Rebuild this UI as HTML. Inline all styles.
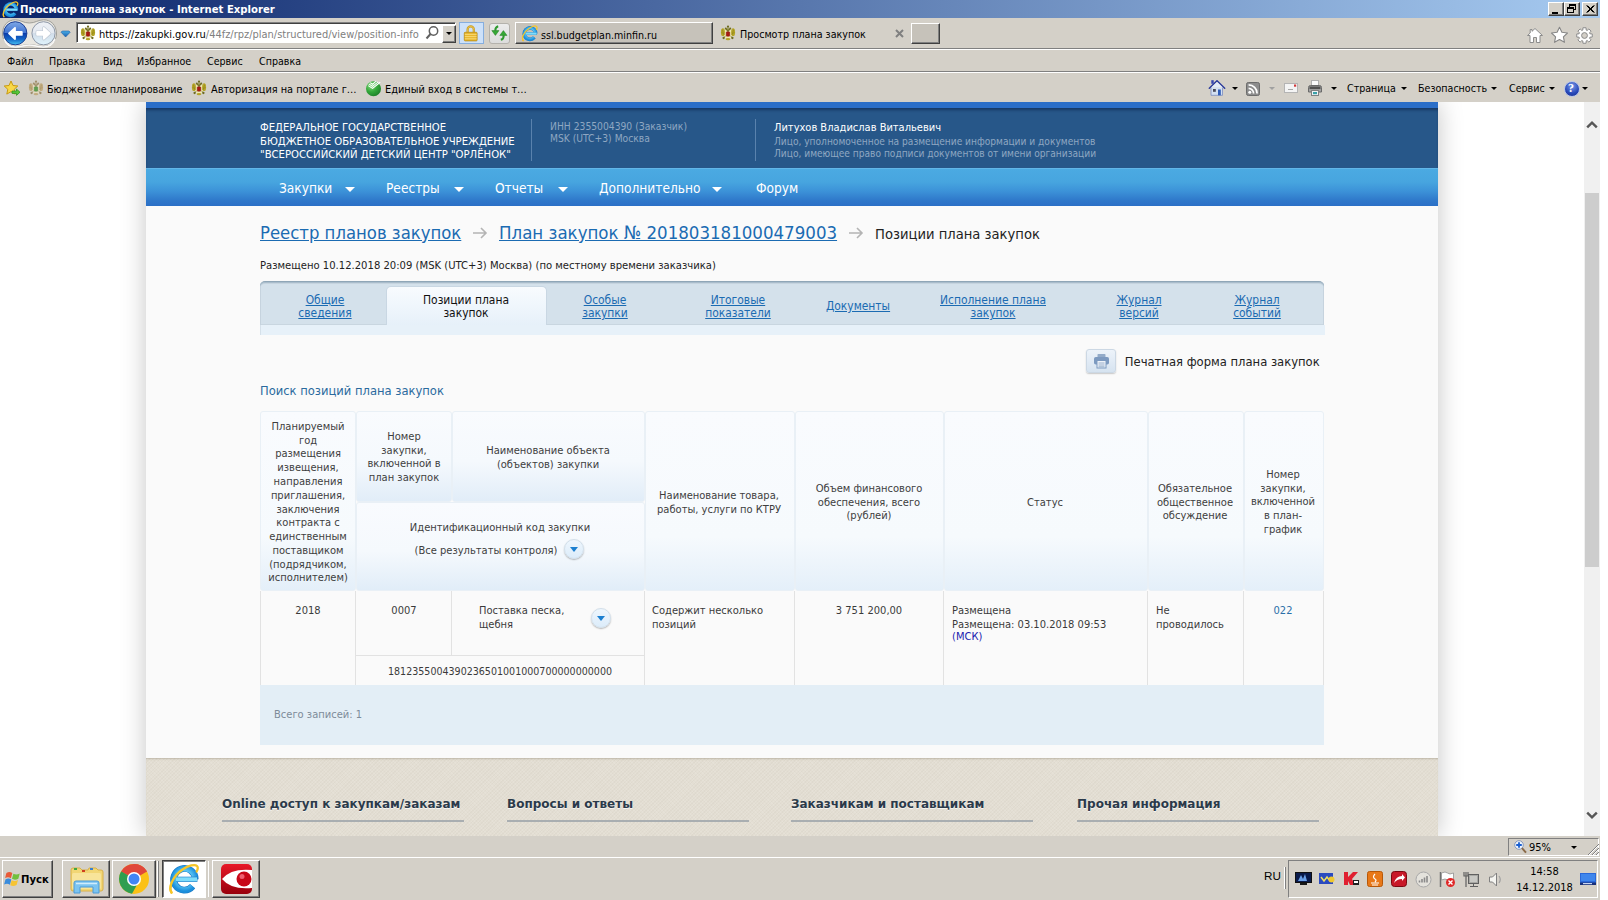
<!DOCTYPE html>
<html lang="ru">
<head>
<meta charset="utf-8">
<title>Просмотр плана закупок - Internet Explorer</title>
<style>
*{box-sizing:border-box}
html,body{margin:0;padding:0}
body{width:1608px;height:900px;overflow:hidden;background:#fff;font-family:"DejaVu Sans Condensed","DejaVu Sans","Liberation Sans",sans-serif;font-stretch:condensed;font-size:10.6px;color:#000;position:relative}
.abs{position:absolute}
.t{position:absolute;white-space:nowrap;line-height:14px}
/* ---------- browser chrome ---------- */
#chrome{position:absolute;left:0;top:0;width:1600px;height:102px;background:#d4d0c8}
#titlebar{position:absolute;left:0;top:0;width:1600px;height:18px;background:linear-gradient(to right,#0a246a 0%,#a6caf0 100%)}
#titlebar .t{left:20px;top:3px;color:#fff;font-weight:bold;font-size:11.23px}
.wbtn{position:absolute;top:2px;width:16px;height:14px;background:#d4d0c8;border:1px solid;border-color:#fff #404040 #404040 #fff;box-shadow:inset -1px -1px 0 #808080}
.sep{position:absolute;left:0;width:1600px;height:2px;border-top:1px solid #808080;border-bottom:1px solid #fff}
#addr{position:absolute;left:76px;top:22px;width:380px;height:21px;background:#fff;border:1px solid;border-color:#808080 #fff #fff #808080;box-shadow:inset 1px 1px 0 #404040}
.menu .t{top:54px;font-size:10.6px}
.bm .t{top:82.7px;font-size:10.7px}
.cmd .t{top:81px;font-size:10.6px}
.tri{position:absolute;width:0;height:0;border-left:3px solid transparent;border-right:3px solid transparent;border-top:3px solid #000}
/* ---------- page ---------- */
#view{position:absolute;left:0;top:102px;width:1584px;height:734px;background:#fff;overflow:hidden}
#wrap{position:absolute;left:146px;top:0;width:1292px;height:734px;background:#fafafa;box-shadow:0 0 24px rgba(0,0,0,.23)}

/* page */
#hdrtop{position:absolute;left:0;top:0;width:1292px;height:7px;background:#2b6ec8}
#hdr{position:absolute;left:0;top:6px;width:1292px;height:60px;background:#275789;box-shadow:inset 0 3px 3px -1px rgba(10,30,70,.55)}
#hdr .t{color:#fff}
#hdr .g{color:#8fa7c2}
.vsep{position:absolute;top:11px;width:1px;height:42px;background:#5a82ad}
#nav{position:absolute;left:0;top:66px;width:1292px;height:38px;background:linear-gradient(#4baae2 0%,#47a5df 35%,#3c92d8 60%,#2f78ca 85%,#2b6fc6 100%);border-top:1px solid #62b6e8}
#nav .t{color:#fff;font-size:13.6px;top:10px;line-height:18px}
.ntri{position:absolute;top:18px;width:0;height:0;border-left:5px solid transparent;border-right:5px solid transparent;border-top:5px solid #fff}
a,.lnk{color:#1b6bb2;text-decoration:underline}
#bc .t{font-size:18.33px;line-height:24px;top:119px}
#tabs{position:absolute;left:114px;top:179px;width:1064px;height:44px;background:#d4e1eb;border-top:1px solid #8fa6b7;border-radius:5px 5px 0 0;box-shadow:inset 0 1px 0 #a9bccb,inset 0 2px 0 #c6d4df,inset 1px 0 0 #c6d3de,inset -1px 0 0 #c6d3de,inset 0 -1px 0 #c9d6e0}
#tabsub{position:absolute;left:114px;top:223px;width:1065px;height:10px;background:#e7f1f9;box-shadow:inset 1px 0 0 #d6e1ea}
#tabs .tb{position:absolute;top:12px;text-align:center;font-size:11.93px;line-height:13.2px;transform:translateX(-50%);white-space:nowrap}
#tabact{position:absolute;left:126px;top:4px;width:161px;height:40px;border-radius:5px 5px 0 0;background:linear-gradient(#f8fbfe 0%,#eff6fc 50%,#e6f0f9 100%);border:1px solid #c9d7e3;border-bottom:none}
.th{position:absolute;background:linear-gradient(#f9fbfe 0%,#f6fafd 70%,#e4eff9 100%);border:1px solid #e9f0f6;border-radius:3px}
.th2{background:linear-gradient(#f9fbfe 0%,#f5f9fd 55%,#e1edf8 100%)}
.ht{position:absolute;text-align:center;font-size:11.05px;line-height:13.78px;color:#3e3e3e;margin-top:.9px;transform:translate(-50%,-50%);white-space:nowrap}
.td{position:absolute;font-size:11.05px;line-height:13.78px;color:#3a3a3a;white-space:nowrap;margin-top:1px}
.ln{position:absolute;background:#e2e2e2}
.cbtn{position:absolute;width:20px;height:20px;border-radius:50%;background:linear-gradient(#eef6fd,#dcecfa);border:1px solid #d2dfea;box-shadow:0 1px 1.500px rgba(0,0,0,.28)}
.cbtn i{position:absolute;left:4.500px;top:7px;width:0;height:0;border-left:4.700px solid transparent;border-right:4.700px solid transparent;border-top:5px solid #1b7fd0}
#pfoot{position:absolute;left:0;top:656px;width:1292px;height:78px;background:repeating-linear-gradient(45deg,rgba(255,255,255,.09) 0,rgba(255,255,255,.09) 1px,rgba(0,0,0,0) 1px,rgba(0,0,0,0) 2.500px),repeating-linear-gradient(-45deg,rgba(120,110,90,.045) 0,rgba(120,110,90,.045) 1px,rgba(0,0,0,0) 1px,rgba(0,0,0,0) 2.500px),#e3ded3;box-shadow:inset 0 2px 2px -1px rgba(120,110,90,.35)}
#pfoot .t{font-family:'DejaVu Sans','Liberation Sans',sans-serif;font-stretch:normal;font-weight:bold;font-size:12px;color:#2b3a4a;top:37px;line-height:18px;text-shadow:0 1px 0 rgba(255,255,255,.7)}
#pfoot .u{position:absolute;top:62px;height:2px;width:242px;background:#a9aeb1}

#sb{position:absolute;left:1584px;top:102px;width:16px;height:734px;background:#f0f0f0}
#sb .thumb{position:absolute;left:1px;top:91px;width:14px;height:374px;background:#cdcdcd}
.raised{position:absolute;background:#d4d0c8;border:1px solid;border-color:#fff #404040 #404040 #fff;box-shadow:inset -1px -1px 0 #808080,inset 1px 1px 0 #d4d0c8}
.sunken{position:absolute;border:1px solid;border-color:#808080 #fff #fff #808080}
/* ---------- bottom ---------- */
#status{position:absolute;left:0;top:836px;width:1600px;height:22px;background:#d4d0c8}
#taskbar{position:absolute;left:0;top:857px;width:1600px;height:43px;padding-top:0;background:#d4d0c8;border-top:1px solid #fff}
</style>
</head>
<body>
<svg width="0" height="0" style="position:absolute">
  <defs>
    <radialGradient id="ieg" cx=".5" cy=".45" r=".6"><stop offset="0" stop-color="#a4ecfd"/><stop offset=".6" stop-color="#58c4f4"/><stop offset="1" stop-color="#1c8fdc"/></radialGradient>
    <symbol id="ie" viewBox="0 0 32 32">
      <path d="M3.500 29.500C.5 25.500 4 17 10.500 10.500" fill="none" stroke="#f2b822" stroke-width="2.200" stroke-linecap="round"/>
      <path d="M27.200 16.200A10.800 10.800 0 1 0 24.600 23.300" fill="none" stroke="#1a7cc8" stroke-width="6.800"/>
      <path d="M27.200 16.200A10.800 10.800 0 1 0 24.600 23.300" fill="none" stroke="url(#ieg)" stroke-width="5.600"/>
      <path d="M8 16.300h21.400" stroke="#1a7cc8" stroke-width="5.200"/>
      <path d="M8 16.300h21" stroke="#7edcfa" stroke-width="4"/>
      <path d="M3.500 29.500C0 24.500 5 13 14.500 6.500 20.500 2.400 27 1 29 3c1.300 1.400.8 3.500-.3 5.500" fill="none" stroke="#f6c628" stroke-width="2.300" stroke-linecap="round"/>
    </symbol>
    <g id="eagle">
      <ellipse cx="8" cy="8.500" rx="4.600" ry="5.200" fill="#efe8b0"/>
      <ellipse cx="2.900" cy="7.200" rx="2" ry="3.900" fill="#b5a528"/>
      <ellipse cx="13.100" cy="7.200" rx="2" ry="3.900" fill="#b5a528"/>
      <path d="M2.300 4.500l1.600 5M1.600 7l2.600 2.800M13.700 4.500l-1.600 5M14.400 7l-2.600 2.800" stroke="#8c8018" stroke-width=".6"/>
      <path d="M8 6.500L5.900 3.600M8 6.500l2.100-2.900M8 5V2.200" stroke="#6f6c22" stroke-width="1.100"/>
      <circle cx="5.800" cy="3.400" r="1" fill="#6f6c22"/><circle cx="10.200" cy="3.400" r="1" fill="#6f6c22"/>
      <circle cx="8" cy="1.500" r="1.100" fill="#6f6c22"/>
      <rect x="6.200" y="6.700" width="3.600" height="4.600" rx=".9" fill="#a61a12" stroke="#7c120c" stroke-width=".4"/>
      <circle cx="3.600" cy="13" r="1.150" fill="#6f6c22"/><circle cx="12.400" cy="13" r="1.150" fill="#6f6c22"/>
      <path d="M5.400 11.300L3.800 12.600M10.600 11.300l1.600 1.300" stroke="#6f6c22" stroke-width=".9"/>
      <ellipse cx="8" cy="14.200" rx="2.300" ry="1.100" fill="#b5a528"/>
    </g>
    <g id="eagle2">
      <ellipse cx="8" cy="8.500" rx="4.600" ry="5.200" fill="#e6dcc0"/>
      <ellipse cx="2.900" cy="7.200" rx="2" ry="3.900" fill="#bfa674"/>
      <ellipse cx="13.100" cy="7.200" rx="2" ry="3.900" fill="#bfa674"/>
      <path d="M2.300 4.500l1.600 5M1.600 7l2.600 2.800M13.700 4.500l-1.600 5M14.400 7l-2.600 2.800" stroke="#a08858" stroke-width=".6"/>
      <path d="M8 6.500L5.900 3.600M8 6.500l2.100-2.900M8 5V2.200" stroke="#97845c" stroke-width="1.100"/>
      <circle cx="5.800" cy="3.400" r="1" fill="#97845c"/><circle cx="10.200" cy="3.400" r="1" fill="#97845c"/>
      <circle cx="8" cy="1.500" r="1.100" fill="#97845c"/>
      <rect x="6.200" y="6.700" width="3.600" height="4.600" rx=".9" fill="#4c963a" stroke="#3a7a2c" stroke-width=".4"/>
      <circle cx="3.600" cy="13" r="1.150" fill="#97845c"/><circle cx="12.400" cy="13" r="1.150" fill="#97845c"/>
      <path d="M5.400 11.300L3.800 12.600M10.600 11.300l1.600 1.300" stroke="#97845c" stroke-width=".9"/>
      <ellipse cx="8" cy="14.200" rx="2.300" ry="1.100" fill="#bfa674"/>
    </g>
      </defs>
</svg>
<div id="chrome">
  <div id="titlebar">
    <svg class="abs" style="left:1.500px;top:.5px" width="17" height="17"><use href="#ie"/></svg>
    <div class="t">Просмотр плана закупок - Internet Explorer</div>
    <div class="wbtn" style="left:1548px"><i class="abs" style="left:3px;top:9px;width:6px;height:2px;background:#000"></i></div>
    <div class="wbtn" style="left:1564px">
      <i class="abs" style="left:4px;top:1px;width:7px;height:6px;border:1px solid #000;border-top-width:2px"></i>
      <i class="abs" style="left:2px;top:4px;width:7px;height:6px;border:1px solid #000;border-top-width:2px;background:#d4d0c8"></i>
    </div>
    <div class="wbtn" style="left:1582px">
      <svg class="abs" style="left:3px;top:2px" width="9" height="8" viewBox="0 0 9 8"><path d="M0.500 0.500l7 7M1.500 0.500l7 7M7.500 0.500l-7 7M8.500 0.500l-7 7" stroke="#000" stroke-width="1" fill="none"/></svg>
    </div>
  </div>
  <div class="sep" style="top:48px"></div>
  <div class="sep" style="top:71px"></div>
  <!-- back / forward -->
  <svg class="abs" style="left:0;top:18px" width="76" height="30" viewBox="0 18 76 30">
    <defs>
      <linearGradient id="bk" x1="0" y1="0" x2="0" y2="1"><stop offset="0" stop-color="#7fa8e6"/><stop offset=".48" stop-color="#3f73d2"/><stop offset=".5" stop-color="#0b3cab"/><stop offset=".75" stop-color="#1366c8"/><stop offset="1" stop-color="#48c4f4"/></linearGradient>
      <linearGradient id="fw" x1="0" y1="0" x2="0" y2="1"><stop offset="0" stop-color="#eef1f6"/><stop offset=".48" stop-color="#e4e9f0"/><stop offset=".5" stop-color="#d2dde9"/><stop offset="1" stop-color="#dff3fc"/></linearGradient>
      <linearGradient id="dd" x1="0" y1="0" x2="0" y2="1"><stop offset="0" stop-color="#49aee8"/><stop offset="1" stop-color="#1a5fae"/></linearGradient>
    </defs>
    <path d="M2.500 34C2.500 25 8 19.800 15.300 19.800c5 0 8 3.200 14 3.200s9-3.200 14.200-3.200C51 19.800 56.500 25 56.500 34c0 7-6 12.500-13 12.500-5 0-9-2-14-2s-9 2-14.200 2C8 46.500 2.500 41 2.500 34z" fill="#e9e7e1" stroke="#a09f99" stroke-width="1"/>
    <path d="M4 39c2 5 6 8 11.300 8 5 0 9-2 14-2s9 2 14.200 2c5 0 9.500-3 11.500-8" fill="none" stroke="#fff" stroke-width="1.600" opacity=".9"/>
    <circle cx="15.300" cy="33.300" r="11.600" fill="url(#bk)" stroke="#1c3f94" stroke-width="1"/>
    <path d="M9 33.400l6-5.600v4.100h6.800v3H15v4.100z" fill="#fff" stroke="#fff" stroke-width="1.800" stroke-linejoin="round"/>
    <circle cx="43.500" cy="33.300" r="11.600" fill="url(#fw)" stroke="#8e98a8" stroke-width="1"/>
    <path d="M49.800 33.400l-6-5.600v4.100H37v3h6.800v4.100z" fill="#fff" stroke="#bcc6d2" stroke-width="2.800" stroke-linejoin="round"/>
    <path d="M49.800 33.400l-6-5.600v4.100H37v3h6.800v4.100z" fill="#fff" stroke="#fff" stroke-width="1.600" stroke-linejoin="round"/>
    <path d="M61 32.200l1.200-1.200h6.800l1.200 1.200-4.600 4.800z" fill="url(#dd)" stroke="#1f5ea6" stroke-width=".6"/>
  </svg>
  <!-- address bar -->
  <div id="addr">
    <svg class="abs eagle" style="left:3px;top:2px" width="16" height="16" viewBox="0 0 16 16"><use href="#eagle"/></svg>
    <div class="t" style="left:22px;top:5px;font-size:10.98px;color:#808080"><span style="color:#000">https://zakupki.gov.ru</span>/44fz/rpz/plan/structured/view/position-info</div>
    <svg class="abs" style="left:347px;top:2px" width="16" height="16" viewBox="0 0 16 16"><circle cx="9.500" cy="6" r="4.200" fill="none" stroke="#606060" stroke-width="1.500"/><path d="M6.500 9l-4 4.500" stroke="#606060" stroke-width="2"/></svg>
    <div class="abs" style="left:365px;top:2px;width:14px;height:18px;background:#d4d0c8;border:1px solid;border-color:#fff #404040 #404040 #fff;box-shadow:inset -1px -1px 0 #808080"><i class="tri" style="left:2.500px;top:6px;border-width:3.500px 3.500px 0 3.500px;border-top-color:#000"></i></div>
  </div>
  <div class="abs" style="left:458.500px;top:22px;width:25px;height:22px;background:#cde1f9;border:1px solid #86aede"></div>
  <svg class="abs" style="left:462px;top:23px" width="18" height="20" viewBox="462 23 18 20"><path d="M467.600 32.500V29.500a3.100 3.100 0 0 1 6.200 0V32.500" fill="none" stroke="#c89a20" stroke-width="2.200"/><path d="M467.600 32.500V29.500a3.100 3.100 0 0 1 6.200 0V32.500" fill="none" stroke="#f0cc58" stroke-width=".8"/><rect x="464.300" y="32.300" width="12.800" height="8.600" rx=".8" fill="#e8b62c" stroke="#b88a14" stroke-width=".8"/><path d="M464.800 34.400h11.800M464.800 36.600h11.800M464.800 38.800h11.800" stroke="#f8dc7c" stroke-width=".9"/></svg>
  <div class="abs" style="left:488.500px;top:22.500px;width:21px;height:21px;background:linear-gradient(#ececec,#dcdcdc);border:1px solid #b4b2ac;border-radius:3px"></div>
  <svg class="abs" style="left:489px;top:23px" width="20" height="20" viewBox="489 23 20 20"><path d="M498.200 26.200c-2 .5-3 2.200-2.900 4.600" fill="none" stroke="#2f9a2f" stroke-width="2"/><path d="M491.800 30.600h7.200l-3.600 4.800z" fill="#35a835" stroke="#1f7a1f" stroke-width=".5"/><path d="M500.800 39.800c2-.5 3-2.200 2.900-4.600" fill="none" stroke="#2f9a2f" stroke-width="2"/><path d="M499.800 35.400h7.200l-3.600-4.800z" fill="#35a835" stroke="#1f7a1f" stroke-width=".5"/></svg>
  <!-- tabs -->
  <div class="abs" style="left:515px;top:22px;width:198px;height:22px;background:#c6c2ba;border:1px solid;border-color:#fff #404040 #404040 #fff;box-shadow:inset -1px -1px 0 #808080"></div>
  <svg class="abs" style="left:520.500px;top:25px" width="17.500" height="17"><use href="#ie"/></svg>
  <div class="t" style="left:541px;top:27.5px;font-size:10.6px">ssl.budgetplan.minfin.ru</div>
  <svg class="abs" style="left:720px;top:25px" width="16" height="16" viewBox="0 0 16 16"><use href="#eagle"/></svg>
  <div class="t" style="left:740px;top:27.5px;font-size:10.65px">Просмотр плана закупок</div>
  <svg class="abs" style="left:895px;top:29px" width="9" height="9" viewBox="0 0 9 9"><path d="M1 1l7 7M8 1l-7 7" stroke="#808080" stroke-width="2"/></svg>
  <div class="abs" style="left:911px;top:23px;width:29px;height:21px;background:#c6c2ba;border:1px solid;border-color:#fff #404040 #404040 #fff;box-shadow:inset -1px -1px 0 #808080"></div>
  <!-- right icons -->
  <svg class="abs" style="left:1526px;top:27px" width="18" height="17" viewBox="0 0 18 17"><path d="M9 1.500L6 4.300V2.500H4.200v3.500L1.500 8.500h2.500V15.500h3.500v-5h3v5H14V8.500h2.500z" fill="#fff" stroke="#8c8c8c" stroke-width="1" stroke-linejoin="round"/></svg>
  <svg class="abs" style="left:1550px;top:26px" width="19" height="18" viewBox="0 0 19 18"><path d="M9.500 1.300l2.400 5 5.600.7-4.100 3.800 1.100 5.500-5-2.700-5 2.700 1.100-5.500-4.100-3.800 5.600-.7z" fill="#fff" stroke="#868686" stroke-width="1.100" stroke-linejoin="round"/></svg>
  <svg class="abs" style="left:1576px;top:27px" width="17" height="17" viewBox="-8.500 -8.500 17 17"><g fill="#fff" stroke="#8c8c8c" stroke-width="1" stroke-linejoin="round"><path d="M5.45 -1.68 L7.74 -1.57 L7.74 1.57 L5.45 1.68 L5.04 2.66 L6.58 4.36 L4.36 6.58 L2.66 5.04 L1.68 5.45 L1.57 7.74 L-1.57 7.74 L-1.68 5.45 L-2.66 5.04 L-4.36 6.58 L-6.58 4.36 L-5.04 2.66 L-5.45 1.68 L-7.74 1.57 L-7.74 -1.57 L-5.45 -1.68 L-5.04 -2.66 L-6.58 -4.36 L-4.36 -6.58 L-2.66 -5.04 L-1.68 -5.45 L-1.57 -7.74 L1.57 -7.74 L1.68 -5.45 L2.66 -5.04 L4.36 -6.58 L6.58 -4.36 L5.04 -2.66z"/><circle r="2.900" fill="#d4d0c8"/></g></svg>
  <!-- menu -->
  <div class="menu">
    <div class="t" style="left:7px">Файл</div><div class="t" style="left:49px">Правка</div><div class="t" style="left:103px">Вид</div><div class="t" style="left:137px">Избранное</div><div class="t" style="left:207px">Сервис</div><div class="t" style="left:259px">Справка</div>
  </div>
  <!-- favourites bar -->
  <svg class="abs" style="left:3px;top:80px" width="18" height="17" viewBox="0 0 18 17"><path d="M8 1l2 4.500 4.800.5-3.600 3.300 1 4.800L8 11.700 3.800 14.100l1-4.800L1.200 6l4.800-.5z" fill="#f8d848" stroke="#c89a10" stroke-width="1" stroke-linejoin="round"/><path d="M9 11h4.500v-2l3.500 3.200-3.500 3.200v-2H9z" fill="#58c838" stroke="#2a8a1a" stroke-width=".7"/></svg>
  <svg class="abs" style="left:28px;top:80px;opacity:.85" width="16" height="16" viewBox="0 0 16 16"><use href="#eagle2"/></svg>
  <svg class="abs" style="left:191px;top:80px" width="16" height="16" viewBox="0 0 16 16"><use href="#eagle"/></svg>
  <svg class="abs" style="left:365px;top:80px" width="17" height="17" viewBox="0 0 17 17"><defs><radialGradient id="sbg" cx=".35" cy=".3" r=".8"><stop offset="0" stop-color="#86dc7e"/><stop offset=".5" stop-color="#34a83a"/><stop offset="1" stop-color="#1a7a26"/></radialGradient></defs><circle cx="8.500" cy="8.800" r="7.500" fill="url(#sbg)"/><path d="M3.300 5.600l4.300 2.800 7.600-6.200M3.800 3.900l3.800 2.500 5.600-4.600M5.200 2.600l2.400 1.600 3.600-3" stroke="#fff" stroke-width="1.100" fill="none"/></svg>
  <div class="bm">
    <div class="t" style="left:47px">Бюджетное планирование</div><div class="t" style="left:211px;font-size:10.85px">Авторизация на портале г…</div><div class="t" style="left:385px;font-size:10.9px">Единый вход в системы т…</div>
  </div>
  <!-- command bar -->
  <svg class="abs" style="left:1208px;top:79px" width="18" height="18" viewBox="0 0 18 18"><path d="M3 8.500V16.300h11.500V8.500" fill="#d3e0f2" stroke="#7a8cc0" stroke-width=".8"/><path d="M9 1.800L1.300 9.200M9 1.800l7.700 7.400" fill="none" stroke="#2c3c9c" stroke-width="1.500" stroke-linecap="round"/><path d="M9 3L3.200 8.600h11.600z" fill="#e4ecf8"/><rect x="3.300" y="1.200" width="2.400" height="3.600" fill="#3848b0"/><rect x="10" y="10.500" width="2.800" height="5.800" fill="#2f5cb8"/><rect x="5" y="10" width="2.800" height="2.800" fill="#4a4a5a"/></svg>
  <i class="tri" style="left:1232px;top:87px"></i>
  <svg class="abs" style="left:1246px;top:82px" width="14" height="14" viewBox="0 0 14 14"><rect x=".5" y=".5" width="13" height="13" rx="1.800" fill="#8c8c8c" stroke="#6c6c6c"/><circle cx="3.800" cy="10.300" r="1.500" fill="#fff"/><path d="M2.600 6.400a5 5 0 0 1 5 5M2.600 2.900a8.500 8.500 0 0 1 8.500 8.500" stroke="#fff" stroke-width="1.700" fill="none"/></svg>
  <i class="tri" style="left:1269px;top:87px;border-top-color:#a0a0a0"></i>
  <svg class="abs" style="left:1284px;top:83px" width="14" height="10" viewBox="0 0 14 10"><rect x=".5" y=".5" width="13" height="9" fill="#f4f4f4" stroke="#b4b4b4"/><rect x="10" y="1.500" width="2.200" height="2.200" fill="#d03838"/><path d="M4 6.500h5" stroke="#a8a8a8"/></svg>
  <svg class="abs" style="left:1307px;top:80px" width="16" height="16" viewBox="0 0 16 16"><rect x="4.500" y=".5" width="7" height="5" fill="#fbfbfb" stroke="#b0b0b0"/><path d="M1.500 12V7.500q0-2 2-2h9q2 0 2 2V12z" fill="#a4a4a4" stroke="#6a6a6a"/><rect x="2.500" y="6.500" width="11" height="2.600" fill="#505050"/><rect x="4.500" y="10.500" width="7" height="5" fill="#eef2f4" stroke="#808080"/><rect x="6" y="12" width="4" height="2.200" fill="#3aa0a8"/></svg>
  <i class="tri" style="left:1331px;top:87px"></i>
  <div class="cmd">
    <div class="t" style="left:1347px">Страница</div><div class="t" style="left:1418px">Безопасность</div><div class="t" style="left:1509px">Сервис</div>
  </div>
  <i class="tri" style="left:1401px;top:87px"></i><i class="tri" style="left:1491px;top:87px"></i><i class="tri" style="left:1549px;top:87px"></i>
  <div class="abs" style="left:1564px;top:81px;width:16px;height:16px;border-radius:50%;background:radial-gradient(circle at 50% 30%,#7a9ae8,#2848b8 60%,#1a2f8a);border:1px solid #b8c4e8"></div>
  <div class="t" style="left:1568px;top:81px;color:#fff;font-weight:bold;font-size:12px;font-family:'Liberation Serif',serif">?</div>
  <i class="tri" style="left:1582px;top:87px"></i>
</div>
<div id="view">
  <div id="wrap">
    <div id="hdrtop"></div>
    <div id="hdr">
      <div class="t" style="left:114px;top:13px;font-size:11.23px;line-height:13.5px">ФЕДЕРАЛЬНОЕ ГОСУДАРСТВЕННОЕ<br>БЮДЖЕТНОЕ ОБРАЗОВАТЕЛЬНОЕ УЧРЕЖДЕНИЕ<br>"ВСЕРОССИЙСКИЙ ДЕТСКИЙ ЦЕНТР "ОРЛЁНОК"</div>
      <div class="vsep" style="left:385px"></div>
      <div class="t g" style="left:404px;top:12px;font-size:10.24px;line-height:12.2px">ИНН 2355004390 (Заказчик)<br>MSK (UTC+3) Москва</div>
      <div class="vsep" style="left:609px"></div>
      <div class="t" style="left:628px;top:13px;font-size:11px;line-height:13.5px">Литухов Владислав Витальевич</div>
      <div class="t g" style="left:628px;top:27.5px;font-size:10.11px;line-height:12.2px">Лицо, уполномоченное на размещение информации и документов<br>Лицо, имеющее право подписи документов от имени организации</div>
    </div>
    <div id="nav">
      <div class="t" style="left:133px">Закупки</div><i class="ntri" style="left:199px"></i>
      <div class="t" style="left:240px">Реестры</div><i class="ntri" style="left:308px"></i>
      <div class="t" style="left:349px">Отчеты</div><i class="ntri" style="left:412px"></i>
      <div class="t" style="left:453px">Дополнительно</div><i class="ntri" style="left:566px"></i>
      <div class="t" style="left:610px">Форум</div>
    </div>
    <div id="bc">
      <div class="t lnk" style="left:114px">Реестр планов закупок</div>
      <svg class="abs" style="left:326px;top:124px" width="16" height="14" viewBox="0 0 16 14"><path d="M1 7h13M9 2l5 5-5 5" fill="none" stroke="#b4b4b4" stroke-width="1.600"/></svg>
      <div class="t lnk" style="left:353px;font-size:18.5px">План закупок № 201803181000479003</div>
      <svg class="abs" style="left:702px;top:124px" width="16" height="14" viewBox="0 0 16 14"><path d="M1 7h13M9 2l5 5-5 5" fill="none" stroke="#b4b4b4" stroke-width="1.600"/></svg>
      <div class="t" style="left:729px;font-size:14.62px;color:#222;top:120px">Позиции плана закупок</div>
    </div>
    <div class="t" style="left:114px;top:157px;font-size:11.16px;color:#222">Размещено 10.12.2018 20:09 (MSK (UTC+3) Москва) (по местному времени заказчика)</div>
    <div id="tabs">
      <div id="tabact"></div>
      <div class="tb lnk" style="left:65px">Общие<br>сведения</div>
      <div class="tb" style="left:206px;color:#111">Позиции плана<br>закупок</div>
      <div class="tb lnk" style="left:345px">Особые<br>закупки</div>
      <div class="tb lnk" style="left:478px">Итоговые<br>показатели</div>
      <div class="tb lnk" style="left:598px;top:18px">Документы</div>
      <div class="tb lnk" style="left:733px">Исполнение плана<br>закупок</div>
      <div class="tb lnk" style="left:879px">Журнал<br>версий</div>
      <div class="tb lnk" style="left:997px">Журнал<br>событий</div>
    </div>
    <div id="tabsub"></div>
    <!-- print -->
    <div class="abs" style="left:939.500px;top:246.500px;width:30px;height:24px;border-radius:3px;background:linear-gradient(#edf3fa,#d6e3f0);border:1px solid #ccd8e4;box-shadow:0 1px 1.500px rgba(0,0,0,.2)"></div>
    <svg class="abs" style="left:946.500px;top:251px" width="17" height="16" viewBox="0 0 17 16"><rect x="4.500" y="1" width="8" height="4" rx=".8" fill="#93abc9"/><rect x="1" y="4" width="15" height="7.500" rx="1.800" fill="#7d9ac0"/><rect x="4" y="7.500" width="9" height="7.500" fill="#eef3f9" stroke="#7d9ac0" stroke-width="1"/><path d="M5.500 10h6M5.500 12h6M5.500 13.800h6" stroke="#8fa8c6" stroke-width=".9"/></svg>
    <div class="t" style="left:978.800px;top:251px;font-size:12.88px;line-height:18px;color:#222">Печатная форма плана закупок</div>
    <div class="t" style="left:114px;top:280px;font-size:12.84px;line-height:18px;color:#2b6a9e">Поиск позиций плана закупок</div>
    <!-- table header -->
    <div class="th" style="left:114px;top:309px;width:96px;height:180px"></div>
    <div class="th th2" style="left:210px;top:309px;width:96px;height:91px"></div>
    <div class="th th2" style="left:306px;top:309px;width:193px;height:91px"></div>
    <div class="th th2" style="left:210px;top:400px;width:289px;height:89px"></div>
    <div class="th" style="left:499px;top:309px;width:150px;height:180px"></div>
    <div class="th" style="left:649px;top:309px;width:149px;height:180px"></div>
    <div class="th" style="left:798px;top:309px;width:204px;height:180px"></div>
    <div class="th" style="left:1002px;top:309px;width:96px;height:180px"></div>
    <div class="th" style="left:1098px;top:309px;width:80px;height:180px"></div>
    <div class="ht" style="left:162px;top:400px">Планируемый<br>год<br>размещения<br>извещения,<br>направления<br>приглашения,<br>заключения<br>контракта с<br>единственным<br>поставщиком<br>(подрядчиком,<br>исполнителем)</div>
    <div class="ht" style="left:258px;top:355px">Номер<br>закупки,<br>включенной в<br>план закупок</div>
    <div class="ht" style="left:402px;top:355px">Наименование объекта<br>(объектов) закупки</div>
    <div class="ht" style="left:354px;top:425px">Идентификационный код закупки</div>
    <div class="ht" style="left:340px;top:448px">(Все результаты контроля)</div>
    <div class="cbtn" style="left:418px;top:437px"><i></i></div>
    <div class="ht" style="left:573px;top:400px">Наименование товара,<br>работы, услуги по КТРУ</div>
    <div class="ht" style="left:723px;top:400px">Объем финансового<br>обеспечения, всего<br>(рублей)</div>
    <div class="ht" style="left:899px;top:400px">Статус</div>
    <div class="ht" style="left:1049px;top:400px">Обязательное<br>общественное<br>обсуждение</div>
    <div class="ht" style="left:1137px;top:399px">Номер<br>закупки,<br>включенной<br>в план-<br>график</div>
    <!-- data row -->
    <div class="ln" style="left:114px;top:489px;width:1px;height:94px"></div>
    <div class="ln" style="left:209px;top:489px;width:1px;height:94px"></div>
    <div class="ln" style="left:305px;top:489px;width:1px;height:64px"></div>
    <div class="ln" style="left:498px;top:489px;width:1px;height:94px"></div>
    <div class="ln" style="left:648px;top:489px;width:1px;height:94px"></div>
    <div class="ln" style="left:797px;top:489px;width:1px;height:94px"></div>
    <div class="ln" style="left:1001px;top:489px;width:1px;height:94px"></div>
    <div class="ln" style="left:1097px;top:489px;width:1px;height:94px"></div>
    <div class="ln" style="left:1177px;top:489px;width:1px;height:94px"></div>
    <div class="ln" style="left:210px;top:553px;width:289px;height:1px"></div>
    <div class="td" style="left:162px;top:501px;transform:translateX(-50%)">2018</div>
    <div class="td" style="left:258px;top:501px;transform:translateX(-50%)">0007</div>
    <div class="td" style="left:333px;top:501px">Поставка песка,<br>щебня</div>
    <div class="cbtn" style="left:445px;top:506px"><i></i></div>
    <div class="td" style="left:354px;top:562px;transform:translateX(-50%);font-size:10.58px">1812355004390236501001000700000000000</div>
    <div class="td" style="left:506px;top:501px">Содержит несколько<br>позиций</div>
    <div class="td" style="left:723px;top:501px;transform:translateX(-50%)">3 751 200,00</div>
    <div class="td" style="left:806px;top:501px">Размещена<br>Размещена: 03.10.2018 09:53<br><span style="color:#1c1cb0;position:relative;top:-1.200px">(МСК)</span></div>
    <div class="td" style="left:1010px;top:501px">Не<br>проводилось</div>
    <div class="td" style="left:1137px;top:501px;transform:translateX(-50%);color:#2a6fa8">022</div>
    <div class="abs" style="left:114px;top:583px;width:1064px;height:60px;background:#e3eef6"></div>
    <div class="td" style="left:128px;top:605px;color:#7d8b99">Всего записей: 1</div>
    <!-- page footer -->
    <div id="pfoot">
      <div class="t" style="left:76px">Online доступ к закупкам/заказам</div><div class="u" style="left:76px"></div>
      <div class="t" style="left:361px">Вопросы и ответы</div><div class="u" style="left:361px"></div>
      <div class="t" style="left:645px">Заказчикам и поставщикам</div><div class="u" style="left:645px"></div>
      <div class="t" style="left:931px">Прочая информация</div><div class="u" style="left:931px"></div>
    </div>
  </div>
</div>

<div id="sb">
  <div class="thumb"></div>
  <svg class="abs" style="left:2px;top:17.500px" width="12" height="9" viewBox="0 0 12 9"><path d="M1.200 7.400l4.800-4.800 4.800 4.800" fill="none" stroke="#565656" stroke-width="2.400"/></svg>
  <svg class="abs" style="left:2px;top:708.500px" width="12" height="9" viewBox="0 0 12 9"><path d="M1.200 1.600l4.800 4.800 4.800-4.800" fill="none" stroke="#565656" stroke-width="2.400"/></svg>
</div>
<div id="status">
  <div class="sunken" style="left:1508px;top:2px;width:91px;height:18px"></div>
  <svg class="abs" style="left:1514px;top:4px" width="13" height="14" viewBox="0 0 13 14"><circle cx="5" cy="5" r="4.300" fill="#eef4fc" stroke="#8898b8" stroke-width="1"/><path d="M5 2.200v5.600M2.200 5h5.600" stroke="#1a5fd0" stroke-width="1.800"/><path d="M8 8.200l4 4.500" stroke="#8a6a48" stroke-width="2"/></svg>
  <div class="t" style="left:1529px;top:5px;font-size:11px">95%</div>
  <i class="tri" style="left:1571px;top:10px;border-width:3.500px 3.500px 0 3.500px"></i>
  <svg class="abs" style="left:1587px;top:7px" width="13" height="13" viewBox="0 0 13 13"><path d="M12 1L1 12M12 5L5 12M12 9L9 12" stroke="#808080" stroke-width="1"/><path d="M12 2L2 12M12 6L6 12M12 10L10 12" stroke="#fff" stroke-width="1"/></svg>
</div>
<div id="taskbar">
  <div class="raised" style="left:2px;top:2px;width:51px;height:38px"></div>
  <svg class="abs" style="left:3.500px;top:12.500px" width="17.500" height="16.400" viewBox="0 0 16 15"><path d="M2.200 1.800c2-1.300 3.800-1.100 5.400.1L6.300 6.600C4.700 5.500 3 5.300 1 6.500z" fill="#e85a38"/><path d="M8.600 2.500c1.900 1 3.700 1 5.800-.2l-1.300 4.700c-2.100 1.200-3.900 1.200-5.800.2z" fill="#72c03c"/><path d="M.7 7.700c2-1.300 3.800-1.100 5.400.1L4.800 12.500C3.200 11.400 1.500 11.200-.5 12.400z" fill="#3a8cdc" transform="translate(.6 0)"/><path d="M7 8.400c1.900 1 3.700 1 5.800-.2l-1.300 4.700c-2.100 1.200-3.900 1.200-5.800.2z" fill="#f6c434"/></svg>
  <div class="t" style="left:21px;top:15px;font-weight:bold;font-size:11.2px">Пуск</div>
  <div class="raised" style="left:62px;top:2px;width:48px;height:38px"></div>
  <svg class="abs" style="left:69px;top:6px" width="35" height="31" viewBox="0 0 35 31"><path d="M2 6q0-2 2-2h7l2 2h6l1-2h7l2 2h3q2 0 2 2v17q0 2-2 2H4q-2 0-2-2z" fill="#f2d675" stroke="#d8b048" stroke-width="1"/><rect x="3" y="9" width="29" height="16" rx="1.500" fill="#f8e49a"/><rect x="5" y="4" width="3" height="2" fill="#40a840"/><rect x="13" y="6" width="3" height="2" fill="#d04020"/><rect x="21" y="4" width="3" height="2" fill="#3a80d0"/><path d="M5 19q0-2 2-2h21q2 0 2 2v10h-6v-6H11v6H5z" fill="#7cc4f0" stroke="#4a9ad8" stroke-width="1"/><path d="M7 19.500h21" stroke="#d0ecfc" stroke-width="1.500"/></svg>
  <div class="raised" style="left:112px;top:2px;width:44px;height:38px"></div>
  <svg class="abs" style="left:118px;top:5px" width="32" height="32" viewBox="0 0 32 32"><circle cx="16" cy="16" r="15" fill="#fbc116"/><path d="M16 16L3 8.500A15 15 0 0 1 29 8.500z" fill="#e0473a"/><path d="M16 1a15 15 0 0 1 13 7.500H16z" fill="#e0473a"/><path d="M3 8.500A15 15 0 0 0 14 30.800L20 20 16 16z" fill="#2f9e50"/><path d="M3 8.500L10 20.500 16 16z" fill="#2f9e50"/><circle cx="16" cy="16" r="7" fill="#fff"/><circle cx="16" cy="16" r="5.500" fill="#4285f4"/></svg>
  <div class="abs" style="left:157px;top:3px;width:2px;height:36px;border-left:1px solid #fff;border-right:1px solid #808080"></div>
  <div class="abs" style="left:162px;top:2px;width:44px;height:38px;background:#fff;border:1px solid;border-color:#404040 #fff #fff #404040;box-shadow:inset 1px 1px 0 #808080"></div>
  <svg class="abs" style="left:168px;top:5px" width="32" height="32"><use href="#ie"/></svg>
  <div class="abs" style="left:208px;top:3px;width:1px;height:36px;background:#fff"></div>
  <div class="raised" style="left:212px;top:2px;width:48px;height:38px"></div>
  <svg class="abs" style="left:221px;top:6px" width="31" height="30" viewBox="0 0 31 30"><defs><linearGradient id="rg" x1="0" y1="0" x2="0" y2="1"><stop offset="0" stop-color="#e81828"/><stop offset="1" stop-color="#98000c"/></linearGradient></defs><rect x="0" y="0" width="31" height="30" rx="5" fill="url(#rg)"/><path d="M1 15Q10 4 31 6V24Q10 26 1 15z" fill="#fff"/><circle cx="23" cy="15" r="7.500" fill="#c80818"/><circle cx="21" cy="12.500" r="2.500" fill="#f06070"/></svg>
  <!-- tray -->
  <div class="t" style="left:1264px;top:11.3px;font-size:11.7px;font-family:'Liberation Sans',sans-serif">RU</div>
  <div class="abs" style="left:1284px;top:9px;width:2px;height:22px;border-left:1px solid #fff;border-right:1px solid #808080"></div>
  <div class="sunken" style="left:1288px;top:2px;width:310px;height:38px"></div>
  <svg class="abs" style="left:1295px;top:14px" width="17" height="14" viewBox="0 0 17 14"><rect x=".5" y=".5" width="16" height="10" fill="#0a1a4a" stroke="#101010"/><path d="M3 9l3-6 2 4 2-5 2 7z" fill="#6aa0e8"/><rect x="5" y="11" width="7" height="2" fill="#181818"/></svg>
  <svg class="abs" style="left:1319px;top:15px" width="16" height="12" viewBox="0 0 16 12"><rect x="0" y="0" width="14" height="11" fill="#2a4ac0"/><path d="M2 4l3 4 3-4 3 4" stroke="#f0e060" stroke-width="1.500" fill="none"/><circle cx="12.500" cy="6.500" r="3" fill="#f0c830"/></svg>
  <svg class="abs" style="left:1344px;top:14px" width="15" height="14" viewBox="0 0 15 14"><path d="M0 0h4v5l5-5h5L8 7l3 6H6L4 9v4H0z" fill="#e02030"/><rect x="9" y="8" width="6" height="5" fill="#202020"/><rect x="10" y="9" width="4" height="2" fill="#fff"/></svg>
  <svg class="abs" style="left:1367px;top:13px" width="16" height="16" viewBox="0 0 16 16"><rect x=".5" y=".5" width="15" height="15" rx="2" fill="#e87818" stroke="#b85808"/><path d="M4 12h8M5 14h6M8 3q-3 3 0 5 2 1 0 3" stroke="#fff" stroke-width="1.200" fill="none"/></svg>
  <svg class="abs" style="left:1391px;top:13px" width="16" height="16" viewBox="0 0 16 16"><rect x=".5" y=".5" width="15" height="15" rx="3" fill="#c81828" stroke="#7a0810"/><path d="M3 12Q5 5 11 5V3l3 3.500-3 3.500V8Q6 8 3 12z" fill="#fff"/></svg>
  <svg class="abs" style="left:1415px;top:13px" width="17" height="17" viewBox="0 0 17 17"><circle cx="8.500" cy="8.500" r="7.500" fill="#e4e2dc" stroke="#a8a8a8"/><path d="M4.500 11.500v-2M7 11.500v-3.500M9.500 11.500v-5M12 11.500v-6.500" stroke="#8a8a8a" stroke-width="1.600"/></svg>
  <svg class="abs" style="left:1439px;top:13px" width="17" height="17" viewBox="0 0 17 17"><path d="M1.500 1v15" stroke="#707070" stroke-width="1.500"/><path d="M2.500 2q4-2 6 0t6 0v7q-4 2-6 0t-6 0z" fill="#fff" stroke="#909090" stroke-width=".8"/><circle cx="11.500" cy="11.500" r="4.500" fill="#e02828"/><path d="M9.500 9.500l4 4M13.500 9.500l-4 4" stroke="#fff" stroke-width="1.400"/></svg>
  <svg class="abs" style="left:1463px;top:13px" width="17" height="17" viewBox="0 0 17 17"><rect x="5.500" y="3.500" width="10" height="9" fill="#a8a8a4" stroke="#606060"/><rect x="7" y="5" width="7" height="6" fill="#c8c8c4"/><path d="M7 15.500h8M10.500 13v2" stroke="#606060"/><path d="M3 1v5M1 1v4h4V1M3 6v10" stroke="#606060" stroke-width="1.200" fill="none"/></svg>
  <svg class="abs" style="left:1488px;top:13px" width="15" height="17" viewBox="0 0 15 17"><path d="M1.500 6h3l4-4v13l-4-4h-3z" fill="#f4f4f0" stroke="#808080" stroke-width="1"/><path d="M11 5q2.500 3.500 0 7" stroke="#a0a0a0" stroke-width="1.200" fill="none"/></svg>
  <div class="t" style="left:1544.500px;top:7px;font-size:11px;transform:translateX(-50%)">14:58</div>
  <div class="t" style="left:1544.500px;top:23px;font-size:11px;transform:translateX(-50%)">14.12.2018</div>
  <svg class="abs" style="left:1580px;top:15px" width="16" height="13" viewBox="0 0 16 13"><rect x="0" y="0" width="16" height="12" fill="#2a68d8"/><rect x="1" y="1" width="14" height="7" fill="#3f86ec"/><rect x="0" y="9.500" width="16" height="2.500" fill="#18307a"/><rect x="3" y="10" width="9" height="1.200" fill="#c8d4f0"/></svg>
</div>
</body>
</html>
